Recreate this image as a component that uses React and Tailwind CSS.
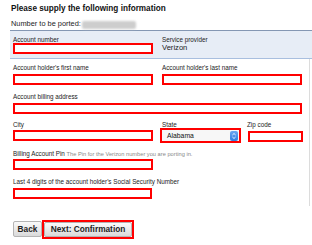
const inputCls = 'block h-[11px] border-2 border-[#ff0000] bg-white outline-none';
const labelCls = 'block text-[6.3px] leading-[6px] text-[#222] whitespace-nowrap';

const Stepper = () => (
  <svg width="8" height="10" viewBox="0 0 8 10">
    <defs>
      <linearGradient id="stp" x1="0" y1="0" x2="0" y2="1">
        <stop offset="0" stopColor="#6aa6f0" />
        <stop offset="1" stopColor="#2f7de0" />
      </linearGradient>
    </defs>
    <rect x="0" y="0" width="8" height="10" rx="2" fill="url(#stp)" />
    <path d="M2.4 4 L4 2.5 L5.6 4" stroke="#fff" strokeWidth="0.9" fill="none" />
    <path d="M2.4 6 L4 7.5 L5.6 6" stroke="#fff" strokeWidth="0.9" fill="none" />
  </svg>
);

const App = () => {
  return (
    <div className="w-[312px] h-[245px] bg-white pt-[4px] overflow-hidden font-['Liberation_Sans',Arial,sans-serif] text-[#222]">
      {/* Heading */}
      <h1 className="pl-[11px] text-[8.2px] leading-[10px] font-bold text-[#111]">
        Please supply the following information
      </h1>
      <div className="mt-[5px] pl-[11px] flex items-start text-[7.4px] leading-[9px] text-[#222]">
        <span>Number to be ported:</span>
        <span className="ml-[1px] mt-[2px] inline-block h-[8px] w-[54px] rounded-[2px] bg-[#cdcdcd] blur-[1.2px]" />
      </div>

      {/* Highlighted row */}
      <div className="mt-[1px] ml-[10px] grid grid-cols-[149px_1fr] border-t border-b border-t-[#8497b3] border-b-[#a9bfdf] bg-[#e7edf6] pt-[6px] pb-[4px] pl-[3px]">
        <div>
          <span className={labelCls}>Account number</span>
          <input className={`${inputCls} w-[140px]`} />
        </div>
        <div>
          <span className={labelCls}>Service provider</span>
          <span className="block text-[7.6px] leading-[9px] text-[#222]">Verizon</span>
        </div>
      </div>

      {/* Rest of form */}
      <div className="ml-[10px] w-[300px] border-r border-[#dcdcdc] pl-[3px] pt-[6px] pb-[7px]">
        <div className="grid grid-cols-[149px_1fr]">
          <div>
            <span className={labelCls}>Account holder's first name</span>
            <input className={`${inputCls} mt-[3px] w-[140px]`} />
          </div>
          <div>
            <span className={labelCls}>Account holder's last name</span>
            <input className={`${inputCls} mt-[3px] w-[140px]`} />
          </div>
        </div>

        <div className="mt-[9px]">
          <span className={labelCls}>Account billing address</span>
          <input className={`${inputCls} mt-[3px] w-[289px]`} />
        </div>

        <div className="mt-[8px] flex items-start">
          <div className="w-[147px]">
            <span className={labelCls}>City</span>
            <input className={`${inputCls} mt-[2px] w-[140px]`} />
          </div>
          <div className="w-[88px]">
            <span className={`${labelCls} pl-[2px]`}>State</span>
            <div className="flex h-[15px] w-[81px] items-center justify-between border-2 border-[#ff0000] bg-[#f7f7f7] pl-[5px] pr-[1px]">
              <span className="text-[6.8px] leading-[8px] text-[#111]">Alabama</span>
              <Stepper />
            </div>
          </div>
          <div>
            <span className={`${labelCls} -ml-[1px]`}>Zip code</span>
            <input className={`${inputCls} mt-[3px] h-[10px] w-[55px]`} />
          </div>
        </div>

        <div className="mt-[8px]">
          <span className={labelCls}>
            Billing Account Pin{' '}
            <span className="text-[5.7px] text-[#888]">The Pin for the Verizon number you are porting in.</span>
          </span>
          <input className={`${inputCls} mt-[2px] w-[140px]`} />
        </div>

        <div className="mt-[9px]">
          <span className={labelCls}>Last 4 digits of the account holder's Social Security Number</span>
          <input className={`${inputCls} mt-[3px] w-[139px]`} />
        </div>
      </div>

      {/* Buttons */}
      <div className="mt-[14px] flex items-start pl-[13px]">
        <button className="mt-[1px] flex h-[16px] w-[29px] items-center justify-center rounded-[2px] border border-[#b4b4b4] bg-gradient-to-b from-[#fafafa] to-[#dadada] text-[8.3px] font-bold leading-none text-[#222]">
          Back
        </button>
        <div className="h-[19px] w-[92px] border-2 border-[#ff0000]">
          <button className="flex h-full w-full items-center justify-center rounded-[2px] border border-[#b4b4b4] bg-gradient-to-b from-[#fafafa] to-[#dadada] text-[8.3px] font-bold leading-none text-[#222]">
            Next: Confirmation
          </button>
        </div>
      </div>
    </div>
  );
};

export default App;
